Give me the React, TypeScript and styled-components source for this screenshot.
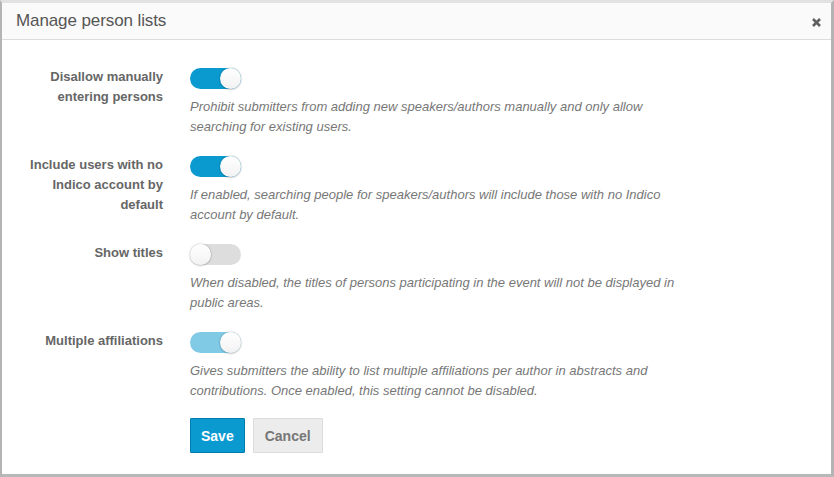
import React from "react";
import styled, { createGlobalStyle } from "styled-components";

const Global = createGlobalStyle`
  html, body { margin: 0; padding: 0; background: #fff; }
  body { font-family: "Liberation Sans", Arial, sans-serif; }
  * { box-sizing: border-box; }
`;

const Frame = styled.div`
  width: 834px;
  height: 477px;
  border-top: 3px solid #e2e2e2;
  border-left: 2px solid #b4b4b4;
  border-right: 3px solid #b4b4b4;
  border-bottom: 3px solid #b8b8b8;
  background: #fff;
  display: flex;
  flex-direction: column;
`;

const Header = styled.div`
  height: 37px;
  flex: none;
  background: #fafafa;
  border-bottom: 1px solid #dcdcdc;
  display: flex;
  align-items: center;
  justify-content: space-between;
  padding: 0 10px 0 14px;
`;

const Title = styled.h2`
  margin: 0;
  font-size: 17px;
  font-weight: normal;
  color: #555;
  letter-spacing: -0.1px;
`;

const Close = styled.button`
  border: none;
  background: none;
  padding: 0;
  width: 10px;
  height: 10px;
  display: flex;
  align-items: center;
  justify-content: center;
  cursor: pointer;
  margin-top: 2px;
`;

const Body = styled.form`
  padding: 27px 0 0 13px;
  display: flex;
  flex-direction: column;
`;

const Row = styled.div`
  display: grid;
  grid-template-columns: 148px 500px;
  column-gap: 27px;
  margin-bottom: 18px;
`;

const Label = styled.label`
  text-align: right;
  font-weight: bold;
  font-size: 13px;
  line-height: 20px;
  color: #666;
`;

const Field = styled.div`
  display: flex;
  flex-direction: column;
`;

const ToggleWrap = styled.div`
  height: 23px;
  padding-top: 1px;
`;

const Track = styled.span<{ $on: boolean; $muted?: boolean }>`
  position: relative;
  display: block;
  width: 51px;
  height: 21px;
  border-radius: 11px;
  background: ${(p) => (p.$on ? (p.$muted ? "#80cae6" : "#0a9ad0") : "#dddddd")};
`;

const Knob = styled.span<{ $on: boolean }>`
  position: absolute;
  top: 0;
  left: ${(p) => (p.$on ? "30px" : "0")};
  width: 21px;
  height: 21px;
  border-radius: 50%;
  background: linear-gradient(#ffffff, #f2f2f2);
  box-shadow: 0 0 2px rgba(0, 0, 0, 0.3), 0 1px 2px rgba(0, 0, 0, 0.15);
`;

const Desc = styled.p`
  margin: 7px 0 0;
  font-style: italic;
  font-size: 13px;
  line-height: 20px;
  color: #777;
`;

const Actions = styled.div`
  display: flex;
  gap: 8px;
  margin-left: 175px;
  margin-top: -1px;
`;

const Button = styled.button<{ $primary?: boolean }>`
  height: 35px;
  padding: 0 ${(p) => (p.$primary ? "10px" : "11px")};
  font-family: "Liberation Sans", Arial, sans-serif;
  font-size: 14px;
  font-weight: bold;
  border-radius: 1px;
  border: 1px solid ${(p) => (p.$primary ? "#007cac" : "#dcdcdc")};
  background: ${(p) => (p.$primary ? "#0a9ad0" : "#ececec")};
  color: ${(p) => (p.$primary ? "#fff" : "#777")};
`;

const Toggle = ({ on, muted }: { on: boolean; muted?: boolean }) => (
  <ToggleWrap>
    <Track $on={on} $muted={muted}>
      <Knob $on={on} />
    </Track>
  </ToggleWrap>
);

const rows = [
  {
    label: "Disallow manually entering persons",
    on: true,
    desc: "Prohibit submitters from adding new speakers/authors manually and only allow searching for existing users.",
  },
  {
    label: "Include users with no Indico account by default",
    on: true,
    desc: "If enabled, searching people for speakers/authors will include those with no Indico account by default.",
  },
  {
    label: "Show titles",
    on: false,
    desc: "When disabled, the titles of persons participating in the event will not be displayed in public areas.",
  },
  {
    label: "Multiple affiliations",
    on: true,
    muted: true,
    desc: "Gives submitters the ability to list multiple affiliations per author in abstracts and contributions. Once enabled, this setting cannot be disabled.",
  },
];

export default function App() {
  return (
    <>
      <Global />
      <Frame>
        <Header>
          <Title>Manage person lists</Title>
          <Close aria-label="Close">
            <svg width="9" height="9" viewBox="0 0 9 9">
              <path d="M1 1 L8 8 M8 1 L1 8" stroke="#5f5f5f" strokeWidth="2.6" strokeLinecap="butt" />
            </svg>
          </Close>
        </Header>
        <Body>
          {rows.map((r) => (
            <Row key={r.label}>
              <Label>{r.label}</Label>
              <Field>
                <Toggle on={r.on} muted={r.muted} />
                <Desc>{r.desc}</Desc>
              </Field>
            </Row>
          ))}
          <Actions>
            <Button type="button" $primary>Save</Button>
            <Button type="button">Cancel</Button>
          </Actions>
        </Body>
      </Frame>
    </>
  );
}
